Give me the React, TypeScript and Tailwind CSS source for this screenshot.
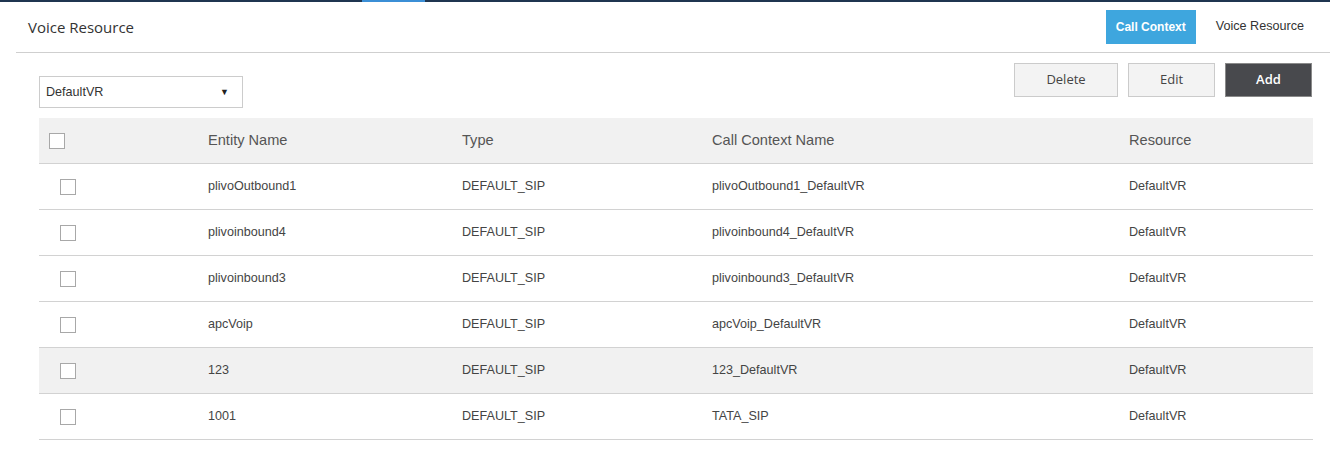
import React from "react";

const rows = [
  { name: "plivoOutbound1", type: "DEFAULT_SIP", ctx: "plivoOutbound1_DefaultVR", res: "DefaultVR" },
  { name: "plivoinbound4", type: "DEFAULT_SIP", ctx: "plivoinbound4_DefaultVR", res: "DefaultVR" },
  { name: "plivoinbound3", type: "DEFAULT_SIP", ctx: "plivoinbound3_DefaultVR", res: "DefaultVR" },
  { name: "apcVoip", type: "DEFAULT_SIP", ctx: "apcVoip_DefaultVR", res: "DefaultVR" },
  { name: "123", type: "DEFAULT_SIP", ctx: "123_DefaultVR", res: "DefaultVR", hover: true },
  { name: "1001", type: "DEFAULT_SIP", ctx: "TATA_SIP", res: "DefaultVR" },
];

function Box() {
  return <span className="block w-4 h-4 border border-[#a8a8a8] bg-white" />;
}

export default function App() {
  return (
    <div className="w-[1330px] h-[460px] bg-white overflow-hidden" style={{ fontFamily: '"Liberation Sans", Arial, sans-serif' }}>
      <div className="h-[2px] bg-[#1f3550] flex">
        <div className="w-[362px]" />
        <div className="w-[63px] bg-[#3b8fd6]" />
      </div>
      <div className="ml-[16px] h-[51px] border-b border-[#cfcfcf] flex items-center justify-between">
        <div className="pl-[12px] pt-[1px] text-[15px] text-[#333]" style={{ fontFamily: '"Open Sans", sans-serif' }}>Voice Resource</div>
        <div className="flex items-center pr-[26px] pb-[1px]">
          <div className="w-[90px] h-[34px] bg-[#3ea6de] text-white text-[12px] font-bold flex items-center justify-center">Call Context</div>
          <div className="ml-[20px] text-[12.6px] text-[#333]">Voice Resource</div>
        </div>
      </div>
      <div className="px-[39px] pr-[17px]">
        <div className="flex justify-between items-start h-[65px]">
          <div className="mt-[23px] w-[204px] h-[32px] border border-[#cccccc] flex items-center justify-between pl-[6px] pr-[13px] text-[12.6px] text-[#333]">
            <span>DefaultVR</span>
            <span className="text-[9px] text-[#222] pt-[2px]">▼</span>
          </div>
          <div className="flex gap-[10px] mt-[10px] mr-[1px] text-[13px]" style={{ fontFamily: '"Open Sans", sans-serif' }}>
            <div className="w-[104px] h-[34px] bg-[#f3f3f3] border border-[#cbcbcb] text-[#444] flex items-center justify-center">Delete</div>
            <div className="w-[87px] h-[34px] bg-[#f3f3f3] border border-[#cbcbcb] text-[#444] flex items-center justify-center">Edit</div>
            <div className="w-[87px] h-[34px] bg-[#48494d] border border-[#8a8a8a] text-white font-semibold flex items-center justify-center">Add</div>
          </div>
        </div>
        <div className="w-[1274px]">
          <div className="grid grid-cols-[169px_254px_250px_417px_184px] h-[46px] bg-[#f1f1f1] border-b border-[#d2d2d2] items-center text-[14.6px] text-[#555]">
            <div className="pl-[10px]"><Box /></div>
            <div>Entity Name</div>
            <div>Type</div>
            <div>Call Context Name</div>
            <div>Resource</div>
          </div>
          {rows.map((r, i) => (
            <div key={i} className={`grid grid-cols-[169px_254px_250px_417px_184px] h-[46px] border-b border-[#d2d2d2] items-center text-[12.6px] text-[#444] ${r.hover ? "bg-[#f1f1f1]" : "bg-white"}`}>
              <div className="pl-[21px]"><Box /></div>
              <div>{r.name}</div>
              <div>{r.type}</div>
              <div>{r.ctx}</div>
              <div>{r.res}</div>
            </div>
          ))}
        </div>
      </div>
    </div>
  );
}
